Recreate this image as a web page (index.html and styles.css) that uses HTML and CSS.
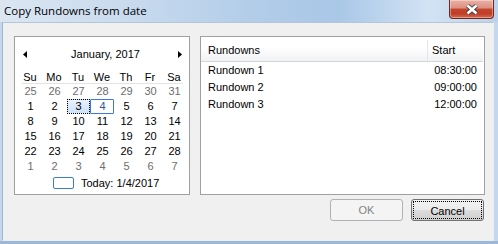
FILE: index.html
```html
<!DOCTYPE html>
<html lang="en">
<head>
    <meta charset="UTF-8">
    <title>Copy Rundowns from date</title>
    <link rel="stylesheet" href="styles.css">
</head>
<body>
    <div class="window">
        <div class="titlebar">
            <span class="title">Copy Rundowns from date</span>
            <div class="close-btn">
                <svg width="14" height="11" viewBox="0 0 14 11">
                    <path d="M2.5 1.5 L11.5 9.5 M11.5 1.5 L2.5 9.5" stroke="#4a4a4a" stroke-width="4.4" fill="none"/>
                    <path d="M2.5 1.5 L11.5 9.5 M11.5 1.5 L2.5 9.5" stroke="#fff" stroke-width="2.4" fill="none"/>
                </svg>
            </div>
        </div>
        <div class="client">
            <div class="panes">
                <div class="calendar">
                    <div class="cal-nav">
                        <svg class="arrow" width="4" height="7" viewBox="0 0 4 7"><polygon points="4,0 4,7 0,3.5" fill="#000"/></svg>
                        <span class="cal-month">January, 2017</span>
                        <svg class="arrow" width="4" height="7" viewBox="0 0 4 7"><polygon points="0,0 0,7 4,3.5" fill="#000"/></svg>
                    </div>
                    <div class="cal-head">
                        <span>Su</span><span>Mo</span><span>Tu</span><span>We</span><span>Th</span><span>Fr</span><span>Sa</span>
                    </div>
                    <div class="cal-sep"></div>
                    <div class="cal-days">
                        <span class="other">25</span><span class="other">26</span><span class="other">27</span><span class="other">28</span><span class="other">29</span><span class="other">30</span><span class="other">31</span>
                        <span>1</span><span>2</span><span class="sel"><i>3</i></span><span class="today">4</span><span>5</span><span>6</span><span>7</span>
                        <span>8</span><span>9</span><span>10</span><span>11</span><span>12</span><span>13</span><span>14</span>
                        <span>15</span><span>16</span><span>17</span><span>18</span><span>19</span><span>20</span><span>21</span>
                        <span>22</span><span>23</span><span>24</span><span>25</span><span>26</span><span>27</span><span>28</span>
                        <span class="other">1</span><span class="other">2</span><span class="other">3</span><span class="other">4</span><span class="other">5</span><span class="other">6</span><span class="other">7</span>
                    </div>
                    <div class="cal-today">
                        <span class="today-box"></span>
                        <span>Today: 1/4/2017</span>
                    </div>
                </div>
                <div class="list">
                    <div class="list-header">
                        <span class="col-name">Rundowns</span>
                        <span class="col-start">Start</span>
                    </div>
                    <div class="list-row"><span class="col-name">Rundown 1</span><span class="col-time">08:30:00</span></div>
                    <div class="list-row"><span class="col-name">Rundown 2</span><span class="col-time">09:00:00</span></div>
                    <div class="list-row"><span class="col-name">Rundown 3</span><span class="col-time">12:00:00</span></div>
                </div>
            </div>
            <div class="buttons">
                <button disabled>OK</button>
                <button class="focused"><span>Cancel</span></button>
            </div>
        </div>
    </div>
</body>
</html>
```

FILE: styles.css
```css
body {
    margin: 0;
    width: 498px;
    height: 244px;
    overflow: hidden;
    font-family: "Liberation Sans", Arial, sans-serif;
    font-size: 11px;
    color: #000;
}
.window {
    display: flex;
    flex-direction: column;
    height: 244px;
    background: #c4d7ec;
    box-shadow: inset 0 -3px 0 #9db8d7;
}
.titlebar {
    height: 22px;
    display: flex;
    align-items: flex-start;
    background: linear-gradient(to right, #dbe6f2 0%, #c9dbee 25%, #b3cde9 50%, #a9c7e7 68%, #d2e3f4 86%, #bcd2ea 100%);
}
.title {
    font-family: "Open Sans", sans-serif;
    font-size: 11.5px;
    line-height: 16px;
    padding: 3px 0 0 4px;
}
.close-btn {
    margin-left: auto;
    margin-right: 4px;
    width: 43px;
    height: 18px;
    display: flex;
    align-items: center;
    justify-content: center;
    border: 1px solid #6b2b23;
    border-top: none;
    border-radius: 0 0 4px 4px;
    background: linear-gradient(#ebb1a5 0%, #dc8f81 45%, #c5462f 50%, #c03c25 75%, #d66c4e 100%);
    box-shadow: inset 0 0 0 1px rgba(255, 255, 255, 0.35);
}
.client {
    flex: 1;
    margin: 0 4px 3px 2px;
    border: 1px solid;
    border-color: #b4c6da #e9eff6 #e9eff6 #9fb6d1;
    background: #f0f0f0;
    padding: 13px 8px 0 11px;
    display: flex;
    flex-direction: column;
}
.panes {
    display: flex;
    gap: 10px;
}
.calendar, .list {
    box-sizing: border-box;
    height: 159px;
    border: 1px solid #a0a0a0;
    background: #fff;
}
.calendar {
    width: 176px;
}
.cal-nav {
    height: 18px;
    margin-top: 8px;
    padding: 0 7px 0 8px;
    display: flex;
    align-items: center;
}
.cal-month {
    flex: 1;
    text-align: center;
    padding-left: 6px;
}
.cal-head, .cal-days {
    display: grid;
    grid-template-columns: repeat(7, 24px);
    margin-left: 3px;
}
.cal-head {
    margin-top: 8px;
    line-height: 12px;
    text-align: center;
}
.cal-sep {
    height: 1px;
    background: #e3e3e3;
    margin: 0 6px 0 7px;
}
.cal-days {
    grid-auto-rows: 15px;
    line-height: 15px;
    text-align: center;
}
.cal-days span {
    padding-left: 1px;
}
.cal-days .other {
    color: #6d6d6d;
}
.cal-days .sel {
    padding-left: 0;
}
.cal-days .sel i {
    display: block;
    font-style: normal;
    margin-left: 1px;
    width: 23px;
    height: 15px;
    box-sizing: border-box;
    border: 1px dotted #000;
    line-height: 13px;
    background: linear-gradient(#e8f1fd, #cde1f9);
}
.cal-days .today {
    box-sizing: border-box;
    border: 1px solid #3a7bd5;
    border-radius: 1px;
    line-height: 13px;
    color: #2f55a4;
}
.cal-today {
    margin-top: 1px;
    height: 16px;
    padding-left: 38px;
    display: flex;
    align-items: center;
    gap: 7px;
}
.today-box {
    width: 21px;
    height: 12px;
    box-sizing: border-box;
    border: 1px solid #3a7bd5;
    border-radius: 2px;
}
.list {
    width: 285px;
}
.list-header {
    display: flex;
    height: 21px;
    padding-top: 3px;
    line-height: 21px;
    border-bottom: 1px solid #d5d5d5;
    background: linear-gradient(#ffffff 40%, #f1f2f4 100%);
    margin-right: 1px;
}
.col-name {
    width: 219px;
    padding-left: 7px;
}
.list-header .col-name {
    border-right: 1px solid #e3e5e8;
}
.col-start {
    padding-left: 4px;
}
.list-row {
    display: flex;
    height: 17px;
    line-height: 17px;
}
.list-row:first-of-type {
    margin-top: 0;
}
.list-header + .list-row {
    margin-top: 0;
}
.col-time {
    width: 50px;
    padding-right: 6px;
    text-align: right;
}
.buttons {
    display: flex;
    justify-content: flex-end;
    gap: 8px;
    margin-top: 4px;
    margin-right: 1px;
}
button {
    width: 73px;
    height: 22px;
    padding: 0;
    font-family: "Liberation Sans", Arial, sans-serif;
    font-size: 11px;
    border-radius: 3px;
}
button:disabled {
    border: 1px solid #adb2b5;
    background: #f4f4f4;
    color: #838383;
}
button.focused {
    border: 1px solid #707070;
    background: linear-gradient(#f2f2f2 0%, #ebebeb 50%, #dddddd 51%, #cfcfcf 100%);
    color: #000;
    display: flex;
    padding: 1px;
}
button.focused span {
    flex: 1;
    border: 1px dotted #000;
    line-height: 16px;
    padding-top: 1px;
}
```
